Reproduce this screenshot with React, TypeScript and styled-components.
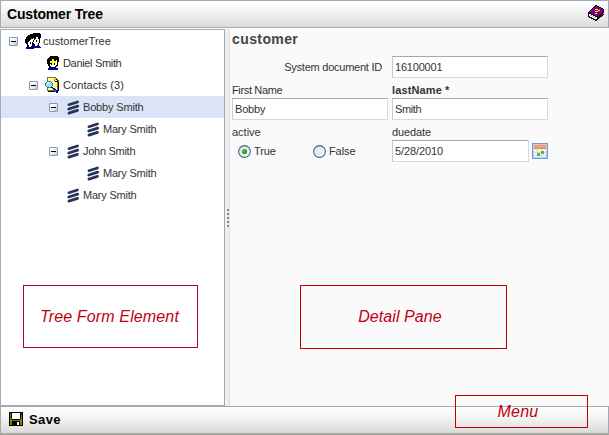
import React from "react";
import styled, { createGlobalStyle } from "styled-components";

const GlobalStyle = createGlobalStyle`
  * { box-sizing: border-box; }
  body {
    margin: 0;
    background: #fafafa;
    font-family: "Liberation Sans", Arial, sans-serif;
    font-size: 11px;
    color: #333;
    overflow: hidden;
  }
`;

const LINE = "#a5a8b5";

const Page = styled.div`
  position: relative;
  width: 609px;
  height: 435px;
  display: flex;
  flex-direction: column;
  border-bottom: 1px solid #a4a59c;
`;

const Bar = styled.header`
  height: 28px;
  flex: none;
  display: flex;
  align-items: center;
  justify-content: space-between;
  border: 1px solid ${LINE};
  background: linear-gradient(#ffffff, #f4f4f4 40%, #dadada);
  padding: 0 4px 0 6px;
`;

const Title = styled.h1`
  margin: 0;
  font-size: 14px;
  line-height: 26px;
  letter-spacing: -0.17px;
  color: #000;
`;

const HelpSlot = styled.span`
  display: flex;
  height: 18px;
`;

const Body = styled.main`
  flex: 1;
  min-height: 0;
  display: flex;
  padding-top: 1px;
`;

const TreePanel = styled.nav`
  width: 225px;
  background: #fff;
  border: 1px solid ${LINE};
`;

const TreeRow = styled.div<{ $level: number; $selected?: boolean }>`
  height: 22px;
  display: flex;
  align-items: center;
  padding-left: ${(p) => 8 + p.$level * 20}px;
  background: ${(p) => (p.$selected ? "#dae4f6" : "transparent")};
`;

const ToggleSlot = styled.span`
  width: 16px;
  display: flex;
`;

const Toggle = styled.span`
  width: 9px;
  height: 9px;
  border: 1px solid #7b9db8;
  border-radius: 1px;
  background: linear-gradient(135deg, #fff 30%, #cec8bb);
  display: flex;
  align-items: center;
  justify-content: center;
  &::after {
    content: "";
    width: 5px;
    height: 1px;
    background: #000;
  }
`;

const IconSlot = styled.span`
  width: 18px;
  height: 18px;
  display: flex;
  align-items: center;
`;

const Text = styled.span<{ $ls?: number }>`
  line-height: 14px;
  white-space: pre;
  letter-spacing: ${(p) => p.$ls ?? 0}px;
`;

const Splitter = styled.div`
  width: 5px;
  display: flex;
  flex-direction: column;
  align-items: center;
  justify-content: center;
  gap: 2px;
  background: linear-gradient(90deg, #ececec, #f4f4f4 40%, #dedede);
`;

const Grip = styled.i`
  width: 2px;
  height: 2px;
  margin-left: 1px;
  background: #888;
`;

const Detail = styled.section`
  flex: 1;
  padding: 0 0 0 2px;
`;

const Heading = styled.h2`
  margin: 0;
  height: 27px;
  padding-top: 1px;
  font-size: 14px;
  line-height: 18px;
  letter-spacing: 0.4px;
  color: #444;
`;

const Form = styled.form`
  display: grid;
  grid-template-columns: 156px 156px;
  column-gap: 4px;
`;

const SideLabel = styled.label`
  display: flex;
  justify-content: flex-end;
  align-items: center;
  height: 22px;
  padding-right: 6px;
`;

const Field = styled.div`
  height: 42px;
  display: flex;
  flex-direction: column;
`;

const FieldLabel = styled.label<{ $bold?: boolean }>`
  height: 20px;
  padding-top: 5px;
  display: flex;
  font-weight: ${(p) => (p.$bold ? 700 : 400)};
`;

const Input = styled.div<{ $w?: number }>`
  width: ${(p) => p.$w ?? 156}px;
  height: 22px;
  background: #fff;
  border: 1px solid;
  border-color: #a6a6ac #d8d8e2 #d8d8e2 #c9c9d0;
  padding: 3px 0 0 2px;
  display: flex;
`;

const InputRow = styled.div`
  display: flex;
  align-items: center;
  gap: 3px;
`;

const Radios = styled.div`
  display: grid;
  grid-template-columns: 75px 75px;
  height: 22px;
  padding-left: 6px;
`;

const RadioItem = styled.span`
  display: flex;
  align-items: center;
  gap: 3px;
`;

const Save = styled.button`
  display: flex;
  align-items: center;
  gap: 6px;
  border: 0;
  background: none;
  padding: 0 0 0 2px;
  font: bold 13px "Liberation Sans", Arial, sans-serif;
  color: #000;

  svg {
    margin-bottom: 2px;
  }
`;

const Note = styled.aside<{ $x: number; $y: number; $w: number; $h: number; $c: string; $ls: number; $shift?: number }>`
  position: absolute;
  left: ${(p) => p.$x}px;
  top: ${(p) => p.$y}px;
  width: ${(p) => p.$w}px;
  height: ${(p) => p.$h}px;
  padding-right: ${(p) => p.$shift ?? 0}px;
  border: 1px solid ${(p) => p.$c};
  color: #c00010;
  font-size: 16px;
  font-style: italic;
  line-height: 18px;
  letter-spacing: ${(p) => p.$ls}px;
  display: flex;
  align-items: center;
  justify-content: center;
`;

const PALETTE: Record<string, string> = {
  k: "#000000", w: "#ffffff", b: "#0000a0", y: "#ffff00", c: "#80f0ff",
  l: "#fff59b", g: "#777777", p: "#800080", d: "#3c003c", o: "#808000",
  s: "#c0c0c0", t: "#1b72b8",
};

// Each string is a row of pixels; a dot is transparent.
function Bitmap({ rows }: { rows: string[] }) {
  const w = Math.max(...rows.map((r) => r.length));
  return (
    <svg width={w} height={rows.length} shapeRendering="crispEdges" aria-hidden>
      {rows.flatMap((row, y) =>
        [...row].map((ch, x) =>
          PALETTE[ch] ? <rect key={`${x}-${y}`} x={x} y={y} width="1" height="1" fill={PALETTE[ch]} /> : null
        )
      )}
    </svg>
  );
}

const PEOPLE = [
  "........kkkkkkk.",
  ".....kkkkkkkkkkk",
  "...kkkkkkkkkkkkk",
  "..kkkkkkkkkkkkkk",
  ".kkkkkkkkkkwwkkk",
  ".kkkkkkkwkkwwkk.",
  "kkkkkkwwwkwwwwk.",
  "kkkkkwwwkwwkwwk.",
  "kkkkwwwwkwwkwwk.",
  "kkkwwkwkwwwwwwk.",
  ".kkwwkwkkwwwwk..",
  "..kwwwwkkkwwwk..",
  "..kkwwwkbkwwkb..",
  "..bkwwkkbbkkbbb.",
  ".bbbkkbkbbbbbbbb",
  ".bbbbbbbb.......",
];
const PERSON = [
  "...kkkkkkkk.",
  "..kkkkkkkkkk",
  ".kkkkkkkkkkk",
  "kkkkkyykkkkk",
  "kkkkkyykkwkk",
  "kkkyyyyyywkk",
  "kkkyyyyyywk.",
  "kkkkkyykwwk.",
  ".kkwkyykwwk.",
  ".kkwwwwwwkk.",
  "..kkwwwwkk..",
  "..bkkkkkb...",
  ".bbbbkbbbbb.",
  ".bbbbbbbbbb.",
];
const CONTACTS = [
  "..ooooooooo...",
  "..owlllwlloo..",
  "..olwllllolko.",
  "..olllwllolwko",
  "..ogggllllkkko",
  ".tcwcctlwlllok",
  "tcwccccgllwlok",
  "tccccccglllwok",
  "tccccccgwlllok",
  ".tccccglllwlok",
  "..ttggbblllwok",
  "..olllwtbbllok",
  "..olwllltbbwok",
  "..ooooooottbbk",
  "...kkkkkkktbb.",
  "...........bb.",
];
const DISK = [
  "kkkkkkkkkkkkkk",
  "kokwwwwwwwwkok",
  "kokwwwwwwwwkkk",
  "kokwwwwwwwwkok",
  "kokwwwwwwwwkok",
  "kokwwwwwwwwkok",
  "kokwwwwwwwwkok",
  "kookkkkkkkkook",
  "kooooooooooook",
  "kookkkkkkkkook",
  "kookkkkkwwkook",
  "kookkkkkwwkook",
  "kookkkkkwwkook",
  "kkkkkkkkkkkkkk",
];
const BOOK = [
  ".......kk.......",
  "......kppkk.....",
  ".....kpppppkk...",
  "....kppppppppkk.",
  "...kpppyyypppppk",
  "..kpppppppyypppk",
  ".kpppppyyypppppk",
  "kpppppppppppppkk",
  "kkkppppyypppppks",
  "kwwkkppppppppkpk",
  "kwsswkkppppkkpk.",
  "kpwwsswkkkpkkk..",
  ".kkpwwsswkpks...",
  "...kkpwwwkks....",
  ".....kkpkks.....",
  ".......kk.......",
];

function RecordIcon() {
  return (
    <svg width="18" height="16" viewBox="0 0 18 16" aria-hidden>
      <g stroke="#26345c" strokeWidth="2.7" strokeLinecap="round" fill="none">
        <path d="M3.9 5.7L12.5 3M3.7 10L12.7 7.1M3.9 14.1L12.5 11.4" />
      </g>
    </svg>
  );
}

function Calendar() {
  return (
    <svg width="16" height="16" viewBox="0 0 16 16" aria-hidden>
      <rect x=".5" y=".5" width="15" height="15" fill="#b7d3f4" stroke="#729bd2" />
      <rect x="2" y="2" width="12" height="12" fill="#f4f5f3" />
      <rect x="2" y="2" width="12" height="4" fill="#f78e49" />
      <path d="M2 3.5h12" stroke="#ffb57b" />
      <path d="M2 9.5h12M2 12.5h12M5.5 6v8M9.5 6v8" stroke="#d4dadd" />
      <path d="M9 8h3v3H9zM5 10h3v3H5z" fill="#5bb052" />
    </svg>
  );
}

function Radio({ checked }: { checked?: boolean }) {
  return (
    <svg width="13" height="13" viewBox="0 0 13 13" aria-hidden>
      <defs>
        <linearGradient id="radioFace" x1="0" y1="0" x2="1" y2="1">
          <stop offset="0" stopColor="#dcdcd7" />
          <stop offset="1" stopColor="#fff" />
        </linearGradient>
      </defs>
      <circle cx="6.5" cy="6.5" r="5.9" fill="url(#radioFace)" stroke="#356692" strokeWidth="1.1" />
      {checked && <circle cx="6.5" cy="6.5" r="2.6" fill="#22a522" />}
      {checked && <circle cx="5.8" cy="5.8" r="1" fill="#62d45e" />}
    </svg>
  );
}

type TreeNode = {
  name: string;
  level: number;
  icon: "people" | "person" | "contacts" | "record";
  open?: boolean;
  selected?: boolean;
  ls: number;
};

const NODES: TreeNode[] = [
  { name: "customerTree", level: 0, icon: "people", open: true, ls: 0.04 },
  { name: "Daniel Smith", level: 1, icon: "person", ls: -0.33 },
  { name: "Contacts (3)", level: 1, icon: "contacts", open: true, ls: 0.08 },
  { name: "Bobby Smith", level: 2, icon: "record", open: true, selected: true, ls: -0.17 },
  { name: "Mary Smith", level: 3, icon: "record", ls: -0.22 },
  { name: "John Smith", level: 2, icon: "record", open: true, ls: -0.28 },
  { name: "Mary Smith", level: 3, icon: "record", ls: -0.22 },
  { name: "Mary Smith", level: 2, icon: "record", ls: -0.22 },
];

const PersonPad = styled.span`
  display: flex;
  padding: 0 0 0 2px;
`;

function NodeIcon({ kind }: { kind: TreeNode["icon"] }) {
  if (kind === "people") return <Bitmap rows={PEOPLE} />;
  if (kind === "person") return <PersonPad><Bitmap rows={PERSON} /></PersonPad>;
  if (kind === "contacts") return <Bitmap rows={CONTACTS} />;
  return <RecordIcon />;
}

export default function App() {
  return (
    <Page>
      <GlobalStyle />
      <Bar>
        <Title>Customer Tree</Title>
        <HelpSlot><Bitmap rows={BOOK} /></HelpSlot>
      </Bar>
      <Body>
        <TreePanel>
          {NODES.map((n, i) => (
            <TreeRow key={i} $level={n.level} $selected={n.selected}>
              <ToggleSlot>{n.open && <Toggle />}</ToggleSlot>
              <IconSlot><NodeIcon kind={n.icon} /></IconSlot>
              <Text $ls={n.ls}>{n.name}</Text>
            </TreeRow>
          ))}
        </TreePanel>
        <Splitter>
          <Grip /><Grip /><Grip /><Grip /><Grip />
        </Splitter>
        <Detail>
          <Heading>customer</Heading>
          <Form>
            <SideLabel><Text $ls={-0.24}>System document ID</Text></SideLabel>
            <Input><Text $ls={-0.2}>16100001</Text></Input>
            <Field>
              <FieldLabel><Text $ls={-0.35}>First Name</Text></FieldLabel>
              <Input><Text $ls={-0.2}>Bobby</Text></Input>
            </Field>
            <Field>
              <FieldLabel $bold><Text $ls={0.12}>lastName *</Text></FieldLabel>
              <Input><Text $ls={-0.4}>Smith</Text></Input>
            </Field>
            <Field>
              <FieldLabel><Text>active</Text></FieldLabel>
              <Radios>
                <RadioItem><Radio checked /><Text $ls={-0.1}>True</Text></RadioItem>
                <RadioItem><Radio /><Text $ls={-0.1}>False</Text></RadioItem>
              </Radios>
            </Field>
            <Field>
              <FieldLabel><Text $ls={-0.1}>duedate</Text></FieldLabel>
              <InputRow>
                <Input $w={137}><Text $ls={-0.1}>5/28/2010</Text></Input>
                <Calendar />
              </InputRow>
            </Field>
          </Form>
        </Detail>
      </Body>
      <Bar as="footer">
        <Save><Bitmap rows={DISK} /><Text $ls={0.4}>Save</Text></Save>
      </Bar>
      <Note $x={23} $y={285} $w={175} $h={63} $c="#b5003c" $ls={0.14} $shift={2}>Tree Form Element</Note>
      <Note $x={300} $y={285} $w={207} $h={64} $c="#c00000" $ls={0.08} $shift={7}>Detail Pane</Note>
      <Note $x={455} $y={395} $w={133} $h={33} $c="#c00000" $ls={0.2} $shift={7}>Menu</Note>
    </Page>
  );
}
